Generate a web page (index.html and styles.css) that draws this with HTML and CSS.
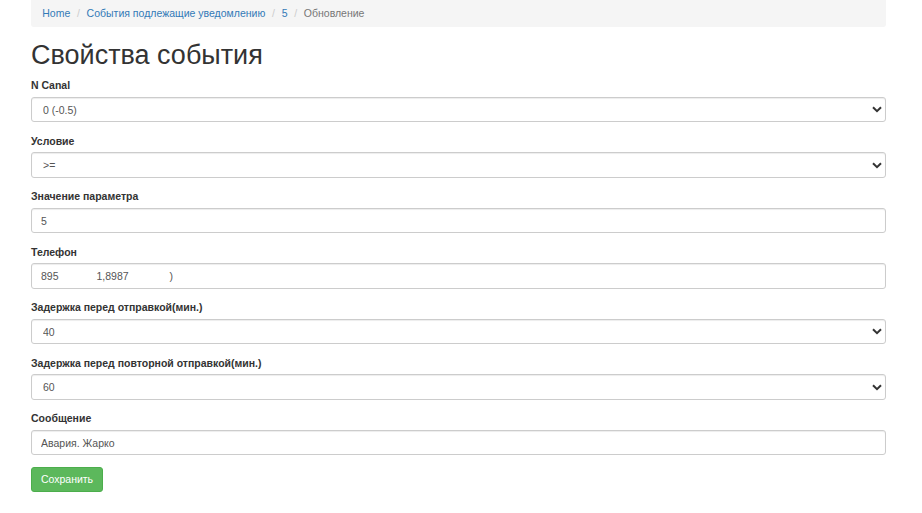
FILE: index.html
```html
<!DOCTYPE html>
<html lang="ru">
<head>
    <meta charset="UTF-8">
    <meta name="viewport" content="width=device-width, initial-scale=1.0">
    <title>Свойства события</title>
    <link rel="stylesheet" href="styles.css">
</head>
<body>
    <div class="container">
        <ul class="breadcrumb">
            <li><a href="#">Home</a></li>
            <li><a href="#">События подлежащие уведомлению</a></li>
            <li><a href="#">5</a></li>
            <li class="active">Обновление</li>
        </ul>

        <h1>Свойства события</h1>

        <form class="event-form">
            <div class="form-group">
                <label for="canal">N Canal</label>
                <div class="select-wrap">
                    <select id="canal" class="form-control">
                        <option>0 (-0.5)</option>
                    </select>
                    <svg class="chevron" width="10" height="7" viewBox="0 0 10 7"><path d="M1 1.2 L5 5.2 L9 1.2" fill="none" stroke="#333" stroke-width="2"/></svg>
                </div>
            </div>

            <div class="form-group">
                <label for="cond">Условие</label>
                <div class="select-wrap">
                    <select id="cond" class="form-control">
                        <option>&gt;=</option>
                    </select>
                    <svg class="chevron" width="10" height="7" viewBox="0 0 10 7"><path d="M1 1.2 L5 5.2 L9 1.2" fill="none" stroke="#333" stroke-width="2"/></svg>
                </div>
            </div>

            <div class="form-group">
                <label for="value">Значение параметра</label>
                <input type="text" id="value" class="form-control" value="5">
            </div>

            <div class="form-group">
                <label for="phone">Телефон</label>
                <input type="text" id="phone" class="form-control" value="895             1,8987              )">
            </div>

            <div class="form-group">
                <label for="delay">Задержка перед отправкой(мин.)</label>
                <div class="select-wrap">
                    <select id="delay" class="form-control">
                        <option>40</option>
                    </select>
                    <svg class="chevron" width="10" height="7" viewBox="0 0 10 7"><path d="M1 1.2 L5 5.2 L9 1.2" fill="none" stroke="#333" stroke-width="2"/></svg>
                </div>
            </div>

            <div class="form-group">
                <label for="repeat">Задержка перед повторной отправкой(мин.)</label>
                <div class="select-wrap">
                    <select id="repeat" class="form-control">
                        <option>60</option>
                    </select>
                    <svg class="chevron" width="10" height="7" viewBox="0 0 10 7"><path d="M1 1.2 L5 5.2 L9 1.2" fill="none" stroke="#333" stroke-width="2"/></svg>
                </div>
            </div>

            <div class="form-group">
                <label for="msg">Сообщение</label>
                <input type="text" id="msg" class="form-control" value="Авария. Жарко">
            </div>

            <button type="submit" class="btn-success">Сохранить</button>
        </form>
    </div>
</body>
</html>
```

FILE: styles.css
```css
* {
    box-sizing: border-box;
}

body {
    margin: 0;
    font-family: "Liberation Sans", Arial, sans-serif;
    font-size: 10.5px;
    line-height: 15px;
    color: #333;
    background-color: #fff;
}

.container {
    width: 855px;
    margin-left: 31px;
}

.breadcrumb {
    list-style: none;
    margin: 0 0 14px;
    padding: 0 11.25px;
    height: 27px;
    display: flex;
    align-items: center;
    background-color: #f5f5f5;
    border-radius: 0 0 3px 3px;
}

.breadcrumb li + li::before {
    content: "/\00a0";
    color: #ccc;
    padding: 0 3.75px 0 6.75px;
}

.breadcrumb a {
    color: #337ab7;
    text-decoration: none;
}

.breadcrumb .active {
    color: #777;
}

h1 {
    margin: 0 0 7.5px;
    font-size: 27px;
    font-weight: 500;
    line-height: 29.7px;
}

.form-group {
    margin-bottom: 11.25px;
}

label {
    display: block;
    font-size: 10.5px;
    font-weight: bold;
    line-height: 15px;
    margin-bottom: 3.75px;
}

.form-control {
    display: block;
    width: 100%;
    height: 25.5px;
    padding: 0 9px;
    font-family: inherit;
    font-size: 10.5px;
    color: #555;
    background-color: #fff;
    border: 1px solid #ccc;
    border-radius: 3px;
    box-shadow: inset 0 1px 1px rgba(0, 0, 0, 0.075);
    white-space: pre;
}

select.form-control {
    appearance: none;
    -webkit-appearance: none;
    padding-left: 11px;
}

.select-wrap {
    position: relative;
}

.chevron {
    position: absolute;
    right: 4px;
    top: 9.5px;
    pointer-events: none;
}

.btn-success {
    width: 72px;
    height: 25.5px;
    padding: 0;
    font-family: inherit;
    font-size: 10.5px;
    font-weight: normal;
    color: #fff;
    background-color: #5cb85c;
    border: 1px solid #4cae4c;
    border-radius: 3px;
    cursor: pointer;
}
```
